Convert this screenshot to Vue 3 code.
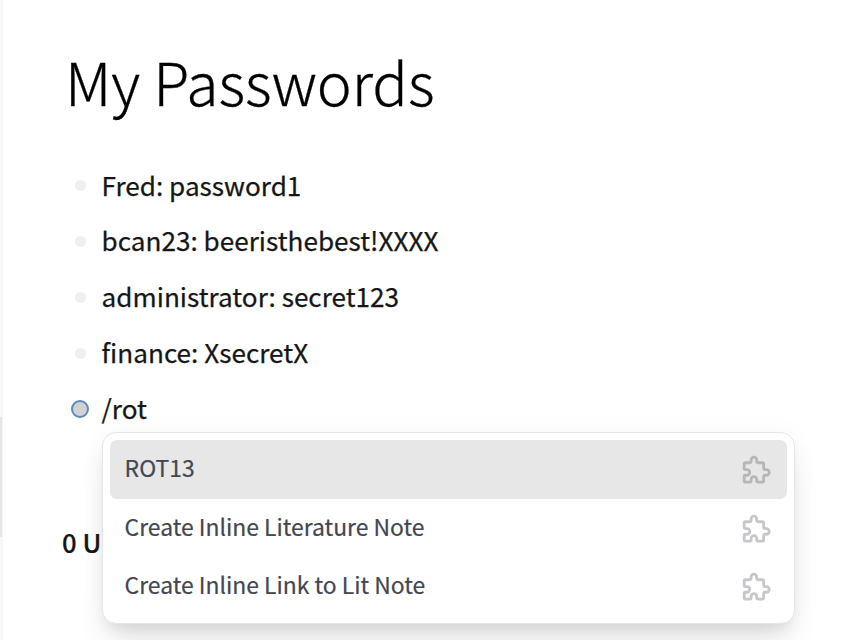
<script setup>
const blocks = [
  { text: 'Fred: password1' },
  { text: 'bcan23: beeristhebest!XXXX' },
  { text: 'administrator: secret123' },
  { text: 'finance: XsecretX' },
  { text: '/rot', active: true },
]
const commands = ['ROT13', 'Create Inline Literature Note', 'Create Inline Link to Lit Note']
</script>

<template>
  <main class="page">
    <aside class="gutter"><div class="thumb"></div></aside>
    <section class="content">
      <h1>My Passwords</h1>
      <ul class="blocks">
        <li v-for="b in blocks" :key="b.text">
          <i class="bullet" :class="{ active: b.active }"></i>
          <span>{{ b.text }}</span>
        </li>
      </ul>
      <div class="references">0 U</div>
    </section>
    <div class="menu">
      <div v-for="(c, i) in commands" :key="c" class="command" :class="{ selected: i === 0 }">
        <span>{{ c }}</span>
        <svg viewBox="0 0 24 24" fill="none" stroke="currentColor" stroke-width="2" stroke-linecap="round" stroke-linejoin="round">
          <path d="M4 7h3a1 1 0 0 0 1-1v-1a2 2 0 0 1 4 0v1a1 1 0 0 0 1 1h3a1 1 0 0 1 1 1v3a1 1 0 0 0 1 1h1a2 2 0 0 1 0 4h-1a1 1 0 0 0-1 1v3a1 1 0 0 1-1 1h-3a1 1 0 0 1-1-1v-1a2 2 0 0 0-4 0v1a1 1 0 0 1-1 1h-3a1 1 0 0 1-1-1v-3a1 1 0 0 1 1-1h1a2 2 0 0 0 0-4h-1a1 1 0 0 1-1-1v-3a1 1 0 0 1 1-1" />
        </svg>
      </div>
    </div>
  </main>
</template>

<style>
body { background: #fff; overflow: hidden; }
</style>

<style scoped>
* { box-sizing: border-box; }
.page {
  position: relative;
  display: flex;
  width: 868px;
  height: 640px;
  overflow: hidden;
  background: #fff;
  color: #161616;
  font-family: "Noto Sans CJK SC", "Noto Sans", sans-serif;
}
.gutter {
  width: 3px;
  height: 640px;
  padding-top: 417px;
  background: #f7f7f7;
}
.thumb { width: 2px; height: 120px; background: #e6e6e6; }
.content { padding: 41px 0 0 59px; }
h1 {
  height: 117px;
  margin: 0;
  padding-left: 3px;
  font-size: 58.9px;
  font-weight: 300;
  line-height: 80px;
  color: #000;
  white-space: nowrap;
  -webkit-text-stroke: 0.3px #000;
}
.blocks { margin: 0; padding: 0 0 0 9px; list-style: none; }
.blocks li {
  display: flex;
  align-items: center;
  gap: 12.6px;
  height: 55.75px;
  font-size: 26.15px;
  white-space: nowrap;
  -webkit-text-stroke: 0.25px #161616;
}
.blocks span { padding-bottom: 1.4px; line-height: 53px; }
.bullet {
  width: 11px;
  height: 11px;
  margin: 0 3.5px;
  border-radius: 50%;
  background: #eeeff1;
}
.bullet.active {
  width: 18px;
  height: 18px;
  margin: 0;
  border: 2px solid #5b8bb8;
  background: #d1d1d1;
}
.references {
  margin-top: 77px;
  font-size: 25.7px;
  font-weight: 500;
  line-height: 56px;
  -webkit-text-stroke: 0.2px #161616;
}
.menu {
  position: absolute;
  left: 102px;
  top: 432px;
  width: 693px;
  height: 192px;
  padding: 7px;
  border: 1px solid #e6e6e6;
  border-radius: 14px;
  background: #fff;
  box-shadow: 0 20px 30px -6px rgba(0, 0, 0, 0.12), 0 8px 12px -4px rgba(0, 0, 0, 0.06), 0 0 28px rgba(0, 0, 0, 0.03);
}
.command {
  display: flex;
  align-items: center;
  justify-content: space-between;
  height: 58.4px;
  padding: 0 14px 0 14.6px;
  border-radius: 7px;
  color: #434651;
  font-size: 22.9px;
  white-space: nowrap;
}
.command span {
  padding-bottom: 3.7px;
  line-height: 55px;
  -webkit-text-stroke: 0.2px #434651;
}
.selected { height: 59px; background: #e7e7e7; }
.command svg { width: 33.4px; height: 33.4px; color: #c6c7cb; }
.selected svg { color: #b5b6b9; }
</style>
